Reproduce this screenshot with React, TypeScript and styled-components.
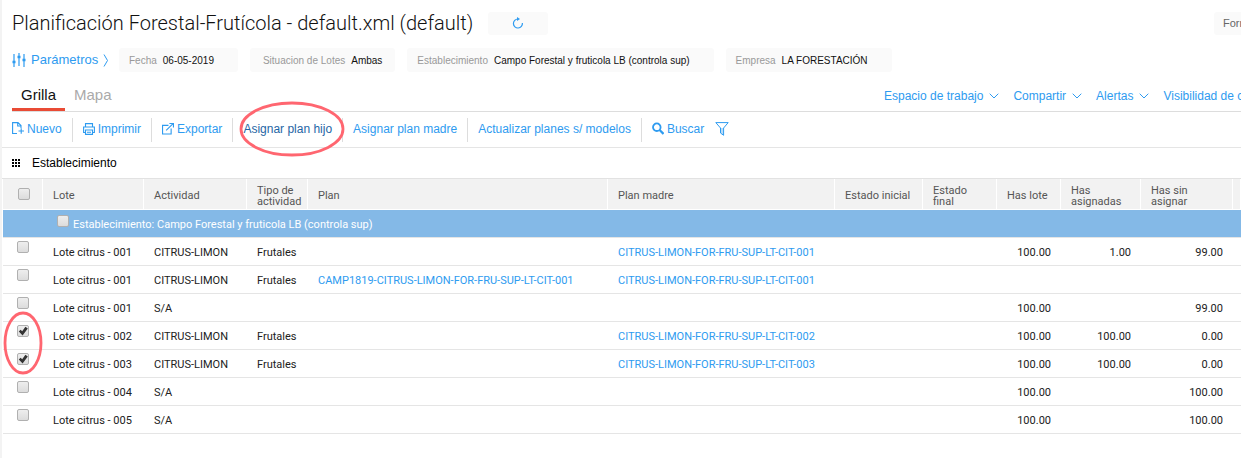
import React, { useState } from 'react';
import styled, { createGlobalStyle, css } from 'styled-components';

const GlobalStyle = createGlobalStyle`
  *, *::before, *::after { box-sizing: border-box; }
  body {
    margin: 0;
    background: #fff;
    color: #111;
    font: 12px/16px "Liberation Sans", Arial, sans-serif;
  }
  button { border: 0; background: none; padding: 0; font: inherit; color: inherit; cursor: pointer; }
  a { color: inherit; text-decoration: none; }
  svg { flex: none; }
`;

const blue = '#2e9bf0';

const Page = styled.main`
  min-height: 100vh;
  border-left: 2px solid #f3f3f3;
  overflow: hidden;
`;

const TitleBar = styled.header`
  display: flex;
  align-items: center;
  gap: 15px;
  padding: 10px 0 0 10px;
`;

const Title = styled.h1`
  margin: 0;
  font: 300 20px/26px Roboto, sans-serif;
  white-space: nowrap;
`;

const RefreshButton = styled.button`
  display: flex;
  align-items: center;
  justify-content: center;
  width: 60px;
  height: 23px;
  border-radius: 3px;
  background: #fafafa;
  color: ${blue};
`;

const FormButton = styled.button`
  width: 27px;
  height: 23px;
  margin-left: auto;
  padding-left: 9px;
  overflow: hidden;
  border-radius: 3px 0 0 3px;
  background: #fafafa;
  color: #666;
  font-size: 11px;
  text-align: left;
`;

const ParamBar = styled.section`
  display: flex;
  align-items: center;
  gap: 12px;
  padding: 12px 0 0 10px;
  white-space: nowrap;
`;

const ParamButton = styled.button`
  display: flex;
  align-items: center;
  gap: 5px;
  width: 95px;
  color: ${blue};
  font-size: 13px;
`;

const Chip = styled.div<{ $even?: boolean }>`
  display: flex;
  align-items: center;
  gap: 6px;
  height: 24px;
  padding: ${(p) => (p.$even ? '1px 13px 0' : '1px 24px 0 10px')};
  border-radius: 3px;
  background: #fafafa;
  font-size: 10px;
`;

const ChipLabel = styled.span`
  color: #999;
`;

const TabBar = styled.div`
  display: flex;
  justify-content: space-between;
  height: 40px;
  margin-left: 10px;
  border-bottom: 1px solid #ddd;
  white-space: nowrap;
`;

const Tabs = styled.nav`
  display: flex;
  align-items: flex-end;
`;

const Tab = styled.button<{ $active?: boolean }>`
  height: 32px;
  padding: 3px 9px 0;
  border-bottom: 3px solid ${(p) => (p.$active ? '#e94b35' : 'transparent')};
  color: ${(p) => (p.$active ? '#111' : '#aaa')};
  font-size: 15px;
`;

const MenuList = styled.nav`
  display: flex;
  gap: 14px;
  width: 357px;
  padding-top: 16px;
  overflow: hidden;
`;

const MenuButton = styled.button`
  display: flex;
  flex: none;
  align-items: center;
  gap: 6px;
  height: 16px;
  color: ${blue};
`;

const Toolbar = styled.div`
  display: flex;
  align-items: center;
  height: 36px;
  border-bottom: 1px solid #e5e5e5;
  white-space: nowrap;
`;

const Tool = styled.div`
  position: relative;
  display: flex;
  align-items: center;
  gap: 11px;
  height: 24px;
  padding: 0 10px 2px;
  & + & { border-left: 1px solid #ddd; }
`;

const ToolButton = styled.button<{ $dark?: boolean }>`
  display: flex;
  align-items: center;
  gap: 3px;
  color: ${(p) => (p.$dark ? '#1f66a5' : blue)};
`;

const GroupBar = styled.div`
  display: flex;
  align-items: center;
  gap: 12px;
  height: 31px;
  padding-left: 10px;
  border-bottom: 1px solid #e2e2e2;
  color: #000;
`;

const Table = styled.table`
  width: calc(100% - 1px);
  margin-left: 1px;
  border-collapse: separate;
  border-spacing: 0;
  table-layout: fixed;
  font: 11px/16px Roboto, sans-serif;
  color: #212121;
`;

const HeadCell = styled.th`
  height: 31px;
  padding: 3px 0 0 10px;
  border-right: 1px solid #fff;
  border-bottom: 1px solid #fff;
  background: #f2f2f2;
  color: #555;
  font-weight: 400;
  line-height: 11px;
  text-align: left;
  white-space: pre-line;
  &:first-child { padding: 0 0 0 15px; }
`;

const GroupCell = styled.td`
  height: 28px;
  padding: 0 0 0 54px;
  border-bottom: 1px solid #e5e5e5;
  background: #84b9e7;
  color: #fff;
`;

const GroupLabel = styled.label`
  display: flex;
  align-items: flex-start;
  gap: 4px;
  span { padding-top: 2px; }
`;

const Cell = styled.td<{ $num?: boolean }>`
  height: 28px;
  padding: 3px 10px 0;
  border-bottom: 1px solid #e5e5e5;
  white-space: nowrap;
  ${(p) => p.$num && css`text-align: right;`}
`;

const CheckCell = styled(Cell)`
  position: relative;
  padding: 3px 0 0 14px;
  vertical-align: top;
`;

const PlanLink = styled.a`
  color: ${blue};
`;

const Check = styled.input`
  appearance: none;
  display: block;
  width: 12px;
  height: 12px;
  margin: 0;
  border: 1px solid #b0b0b0;
  border-radius: 2px;
  background: linear-gradient(#eee, #dcdcdc);
  &:checked::before {
    content: '';
    display: block;
    width: 10px;
    height: 10px;
    background: #333;
    clip-path: polygon(8% 54%, 26% 38%, 42% 52%, 74% 8%, 98% 24%, 46% 94%);
  }
`;

const ToolRing = styled.svg`
  position: absolute;
  z-index: 1;
  top: -17px;
  left: 6px;
  pointer-events: none;
`;

const RowsRing = styled.svg`
  position: absolute;
  z-index: 1;
  top: -11px;
  left: 0;
  pointer-events: none;
`;

const ringStroke = { fill: 'none', stroke: '#ff6670', strokeWidth: 2.8 };

const Chevron = () => (
  <svg width="10" height="6" viewBox="0 0 10 6" fill="none" stroke="currentColor">
    <path d="M.7.7 5 5 9.3.7" />
  </svg>
);

const SlidersIcon = () => (
  <svg width="14" height="14" viewBox="0 0 14 14" fill="none" stroke="currentColor" strokeWidth="1.2">
    <path d="M2 1v13M7 0v13M12 1v13" />
    <path d="M.5 9h3M5.500 4h3M10.500 7h3" strokeWidth="2.4" />
  </svg>
);

const RefreshIcon = () => (
  <svg width="12" height="12" viewBox="0 0 12 12" fill="none" stroke="currentColor" strokeWidth="1.2">
    <path d="M10.400 6A4.500 4.500 0 1 1 6 2" />
    <path d="M5 0v4L8 2z" fill="currentColor" stroke="none" />
  </svg>
);

const NewIcon = () => (
  <svg width="12" height="13" viewBox="0 0 12 13" fill="none" stroke="currentColor" strokeWidth="1.1">
    <path d="M5 11.500H.600V.600H6l3 3V6M5.700.600V4H9M6.500 9h5.500M9.200 6.300v5.500" />
  </svg>
);

const PrintIcon = () => (
  <svg width="12" height="12" viewBox="0 0 12 12" fill="none" stroke="currentColor" strokeWidth="1.1">
    <path d="M2.500 4V.600h7V4M2.500 9.500H.600V4h10.800v5.500H9.500M2.500 7h7v4.400h-7zM4 9.200h4" />
  </svg>
);

const ExportIcon = () => (
  <svg width="12" height="12" viewBox="0 0 13 13" fill="none" stroke="currentColor" strokeWidth="1.2">
    <path d="M7 2.600H.600v9.300h9.300V6M4.500 8 12 .7M8 .600h4.400V5" />
  </svg>
);

const SearchIcon = () => (
  <svg width="12" height="13" viewBox="0 0 12 13" fill="none" stroke="currentColor">
    <circle cx="4.800" cy="5.200" r="3.800" strokeWidth="1.8" />
    <path d="m7.600 8 3.900 3.900" strokeWidth="2.2" />
  </svg>
);

const FunnelIcon = () => (
  <svg width="14" height="14" viewBox="0 0 14 14" fill="none" stroke="currentColor">
    <path d="M5.500 6h3v7l-3-2z" fill="#b9dcf8" stroke="none" />
    <path d="M.8.600h12.400L8.600 6v7.300L5.500 11V6z" />
  </svg>
);

const GridIcon = () => (
  <svg width="8" height="8" viewBox="0 0 8 8" fill="currentColor">
    <path d="M0 0h2v2H0zM3 0h2v2H3zM6 0h2v2H6zM0 3h2v2H0zM3 3h2v2H3zM6 3h2v2H6zM0 6h2v2H0zM3 6h2v2H3zM6 6h2v2H6z" />
  </svg>
);

const params = [
  { label: 'Fecha', value: '06-05-2019' },
  { label: 'Situacion de Lotes', value: 'Ambas', even: true },
  { label: 'Establecimiento', value: 'Campo Forestal y fruticola LB (controla sup)' },
  { label: 'Empresa', value: 'LA FORESTACIÓN' },
];

const columns = [
  { title: 'Lote', width: 101 },
  { title: 'Actividad', width: 103 },
  { title: 'Tipo de\nactividad', width: 61 },
  { title: 'Plan', width: 300 },
  { title: 'Plan madre', width: 227 },
  { title: 'Estado inicial', width: 88 },
  { title: 'Estado\nfinal', width: 74 },
  { title: 'Has lote', width: 64 },
  { title: 'Has\nasignadas', width: 80 },
  { title: 'Has sin\nasignar', width: 92 },
];

const mother = 'CITRUS-LIMON-FOR-FRU-SUP-LT-CIT-';

type Row = { lot: string; fruit?: boolean; plan?: string; mother?: string; has?: string; assigned?: string; free?: string };

const rows: Row[] = [
  { lot: '001', fruit: true, mother: mother + '001', has: '100.00', assigned: '1.00', free: '99.00' },
  { lot: '001', fruit: true, plan: 'CAMP1819-' + mother + '001', mother: mother + '001' },
  { lot: '001', has: '100.00', free: '99.00' },
  { lot: '002', fruit: true, mother: mother + '002', has: '100.00', assigned: '100.00', free: '0.00' },
  { lot: '003', fruit: true, mother: mother + '003', has: '100.00', assigned: '100.00', free: '0.00' },
  { lot: '004', has: '100.00', free: '100.00' },
  { lot: '005', has: '100.00', free: '100.00' },
];

export default function App() {
  const [checked, setChecked] = useState<number[]>([3, 4]);
  const toggle = (i: number) =>
    setChecked((list) => (list.includes(i) ? list.filter((n) => n !== i) : [...list, i]));

  return (
    <Page>
      <GlobalStyle />
      <TitleBar>
        <Title>Planificación Forestal-Frutícola - default.xml (default)</Title>
        <RefreshButton aria-label="Actualizar"><RefreshIcon /></RefreshButton>
        <FormButton>Form</FormButton>
      </TitleBar>
      <ParamBar>
        <ParamButton>
          <SlidersIcon />
          Parámetros
          <svg width="6" height="13" viewBox="0 0 6 13" fill="none" stroke="currentColor">
            <path d="M1 .5 4.500 6.500 1 12.500" />
          </svg>
        </ParamButton>
        {params.map((p) => (
          <Chip key={p.label} $even={p.even}>
            <ChipLabel>{p.label}</ChipLabel>
            <span>{p.value}</span>
          </Chip>
        ))}
      </ParamBar>
      <TabBar>
        <Tabs>
          <Tab $active>Grilla</Tab>
          <Tab>Mapa</Tab>
        </Tabs>
        <MenuList>
          <MenuButton>Espacio de trabajo <Chevron /></MenuButton>
          <MenuButton>Compartir <Chevron /></MenuButton>
          <MenuButton>Alertas <Chevron /></MenuButton>
          <MenuButton>Visibilidad de c</MenuButton>
        </MenuList>
      </TabBar>
      <Toolbar>
        <Tool><ToolButton><NewIcon />Nuevo</ToolButton></Tool>
        <Tool><ToolButton><PrintIcon />Imprimir</ToolButton></Tool>
        <Tool><ToolButton><ExportIcon />Exportar</ToolButton></Tool>
        <Tool>
          <ToolButton $dark>Asignar plan hijo</ToolButton>
          <ToolRing width="106" height="56"><ellipse cx="53" cy="28" rx="51" ry="26" {...ringStroke} /></ToolRing>
        </Tool>
        <Tool><ToolButton>Asignar plan madre</ToolButton></Tool>
        <Tool><ToolButton>Actualizar planes s/ modelos</ToolButton></Tool>
        <Tool>
          <ToolButton><SearchIcon />Buscar</ToolButton>
          <ToolButton aria-label="Filtrar"><FunnelIcon /></ToolButton>
        </Tool>
      </Toolbar>
      <GroupBar><GridIcon />Establecimiento</GroupBar>
      <Table>
        <colgroup>
          <col width={40} />
          {columns.map((c) => <col key={c.title} width={c.width} />)}
          <col />
        </colgroup>
        <thead>
          <tr>
            <HeadCell><Check type="checkbox" aria-label="Seleccionar todo" /></HeadCell>
            {columns.map((c) => <HeadCell key={c.title}>{c.title}</HeadCell>)}
            <HeadCell />
          </tr>
        </thead>
        <tbody>
          <tr>
            <GroupCell colSpan={12}>
              <GroupLabel>
                <Check type="checkbox" />
                <span>Establecimiento: Campo Forestal y fruticola LB (controla sup)</span>
              </GroupLabel>
            </GroupCell>
          </tr>
          {rows.map((r, i) => (
            <tr key={i}>
              <CheckCell>
                <Check
                  type="checkbox"
                  aria-label={`Lote citrus - ${r.lot}`}
                  checked={checked.includes(i)}
                  onChange={() => toggle(i)}
                />
                {i === 3 && (
                  <RowsRing width="40" height="64"><ellipse cx="20" cy="32" rx="18" ry="30" {...ringStroke} /></RowsRing>
                )}
              </CheckCell>
              <Cell>Lote citrus - {r.lot}</Cell>
              <Cell>{r.fruit ? 'CITRUS-LIMON' : 'S/A'}</Cell>
              <Cell>{r.fruit ? 'Frutales' : ''}</Cell>
              <Cell>{r.plan && <PlanLink href="#">{r.plan}</PlanLink>}</Cell>
              <Cell>{r.mother && <PlanLink href="#">{r.mother}</PlanLink>}</Cell>
              <Cell />
              <Cell />
              <Cell $num>{r.has}</Cell>
              <Cell $num>{r.assigned}</Cell>
              <Cell $num>{r.free}</Cell>
              <Cell />
            </tr>
          ))}
        </tbody>
      </Table>
    </Page>
  );
}
